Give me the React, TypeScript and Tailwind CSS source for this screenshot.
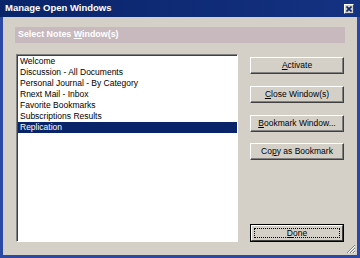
import React from "react";

const items = [
  "Welcome",
  "Discussion - All Documents",
  "Personal Journal - By Category",
  "Rnext Mail - Inbox",
  "Favorite Bookmarks",
  "Subscriptions Results",
  "Replication",
];

const font = { fontFamily: '"Liberation Sans", Arial, sans-serif' };

function Btn({ pre, u, post, className = "" }: { pre?: string; u: string; post?: string; className?: string }) {
  return (
    <button
      className={
        "h-[17px] w-full bg-[#d4d0c8] text-[8.5px] text-black border border-t-white border-l-white border-r-[#404040] border-b-[#404040] shadow-[inset_-1px_-1px_0_#808080] flex items-center justify-center " +
        className
      }
    >
      {pre}
      <span className="underline">{u}</span>
      {post}
    </button>
  );
}

export default function App() {
  return (
    <div className="w-[360px] h-[258px] bg-[#2a48a4] flex flex-col overflow-hidden" style={font}>
      {/* title bar */}
      <div className="h-[17px] bg-gradient-to-r from-[#0a246a] to-[#143282] flex items-center justify-between pl-[5px] pr-[6px] shrink-0">
        <span className="text-white font-bold text-[9.5px]">Manage Open Windows</span>
        <div className="w-[10px] h-[10px] bg-[#d4d0c8] border border-t-white border-l-white border-r-[#404040] border-b-[#404040] flex items-center justify-center">
          <svg width="6" height="6" viewBox="0 0 6 6">
            <path d="M0.5 0.5 L5.5 5.5 M5.5 0.5 L0.5 5.5" stroke="#0a246a" strokeWidth="1.6" />
          </svg>
        </div>
      </div>
      {/* body */}
      <div className="flex-1 mx-[3px] mb-[3px] bg-[#d4d0c8] px-[12px] pt-[10px] relative">
        <div className="h-[16px] bg-[#c8b9bf] flex items-center pl-[3px]">
          <span className="text-white font-bold text-[8.9px]">
            Select Notes <span className="underline">W</span>indow(s)
          </span>
        </div>
        <div className="flex mt-[11px]">
          <div className="ml-[1px] w-[222px] h-[188px] bg-white border border-t-[#808080] border-l-[#808080] border-r-white border-b-white shadow-[inset_1px_1px_0_#404040] pt-[1px] pl-[1px]">
            {items.map((it, i) => (
              <div
                key={it}
                className={
                  "h-[11px] leading-[11px] text-[8.5px] pl-[2px] " +
                  (i === items.length - 1 ? "bg-[#0a246a] text-white" : "text-black")
                }
              >
                {it}
              </div>
            ))}
          </div>
          <div className="ml-[12px] w-[94px] h-[188px] flex flex-col pt-[3px]">
            <Btn u="A" post="ctivate" />
            <div className="h-[12px]" />
            <Btn u="C" post="lose Window(s)" />
            <div className="h-[12px]" />
            <Btn u="B" post="ookmark Window..." />
            <div className="h-[11px]" />
            <Btn pre="Co" u="p" post="y as Bookmark" />
            <div className="mt-auto h-[18px] w-full border border-black">
              <div className="h-full w-full bg-[#d4d0c8] text-[8.5px] border border-t-white border-l-white border-r-[#404040] border-b-[#404040] flex items-center justify-center p-[2px]">
                <div className="w-full h-full border border-dotted border-black flex items-center justify-center">
                  <span className="underline">D</span>one
                </div>
              </div>
            </div>
          </div>
        </div>
        <svg className="absolute right-[1px] bottom-[1px]" width="11" height="11" viewBox="0 0 11 11">
          <path d="M10 2 L2 10 M10 5 L5 10 M10 8 L8 10" stroke="#808080" strokeWidth="1" />
          <path d="M10 3 L3 10 M10 6 L6 10 M10 9 L9 10" stroke="#ffffff" strokeWidth="1" />
        </svg>
      </div>
    </div>
  );
}
